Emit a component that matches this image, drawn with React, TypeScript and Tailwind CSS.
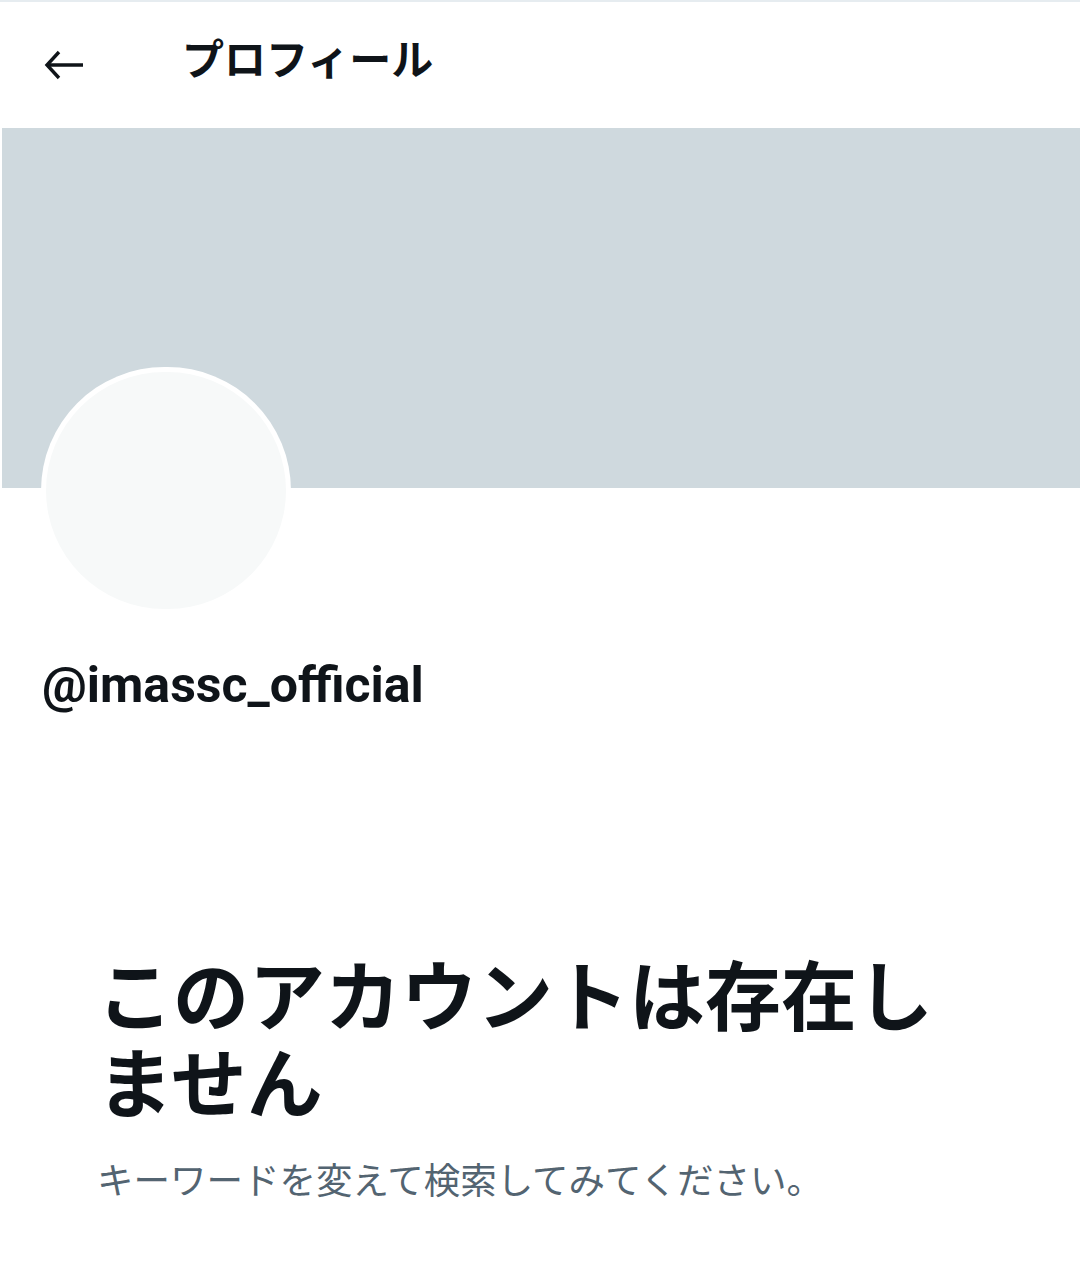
import React from "react";

export default function App() {
  const jp = { fontFamily: 'Roboto, "Noto Sans CJK JP", sans-serif' };
  return (
    <div className="w-[1080px] h-[1267px] bg-white border-t-2 border-[#e6ecf0] overflow-hidden" style={jp}>
      <div className="h-[126px] flex items-center">
        <div className="w-[182px] pl-[44px] flex items-center">
          <svg width="40" height="32" viewBox="0 0 40 32" fill="none" stroke="#0f1419" strokeWidth="3.4">
            <path d="M39 16H4" />
            <path d="M15 3L3 16l12 13" />
          </svg>
        </div>
        <div className="text-[42px] font-bold text-[#0f1419] leading-none -mt-[8px]">プロフィール</div>
      </div>
      <div className="ml-[2px] h-[360px] bg-[#cfd9de]" />
      <div className="pl-[41px] -mt-[121px]">
        <div className="w-[250px] h-[247px] rounded-full bg-white p-[5px]">
          <div className="w-full h-full rounded-full bg-[#f7f9f9]" />
        </div>
      </div>
      <div className="pl-[42px] mt-[46px] text-[50px] font-bold text-[#0f1419] leading-none">@imassc_official</div>
      <div className="px-[97px] mt-[246px]">
        <div className="text-[76px] font-bold text-[#0f1419] leading-[87px] w-[886px]">このアカウントは存在しません</div>
        <div className="mt-[28px] text-[36.5px] text-[#536471] leading-[48px]">キーワードを変えて検索してみてください。</div>
      </div>
    </div>
  );
}
